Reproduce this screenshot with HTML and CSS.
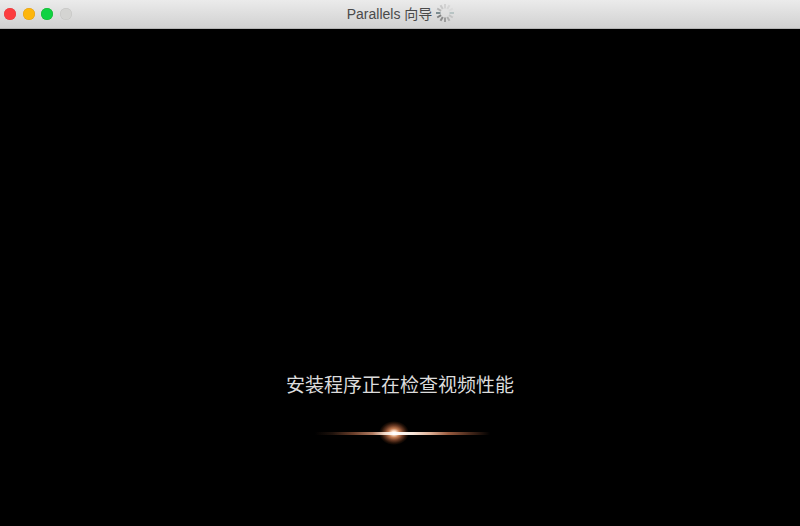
FILE: index.html
```
<!DOCTYPE html>
<html lang="zh">
<head>
<meta charset="utf-8">
<title>Parallels 向导</title>
<link rel="stylesheet" href="styles.css">
</head>
<body>
<div class="window">
  <header class="titlebar">
    <div class="lights">
      <span class="light red"></span>
      <span class="light yellow"></span>
      <span class="light green"></span>
      <span class="light gray"></span>
    </div>
    <div class="title">
      <span>Parallels 向导</span>
      <svg class="spinner" width="20" height="20" viewBox="0 0 20 20" aria-hidden="true">
        <g stroke-width="2" fill="none">
          <path d="M10 1V5.5" stroke="#d2d2d2"/>
          <path d="M14.5 2.2L12.2 6.1" stroke="#d6d6d6"/>
          <path d="M17.8 5.5L13.9 7.8" stroke="#dadada"/>
          <path d="M19 10H14.5" stroke="#b8c4c4"/>
          <path d="M17.8 14.5L13.9 12.2" stroke="#c4c4c4"/>
          <path d="M14.5 17.8L12.2 13.9" stroke="#b0b0b0"/>
          <path d="M10 19V14.5" stroke="#9c9c9c"/>
          <path d="M5.5 17.8L7.8 13.9" stroke="#8c8c8c"/>
          <path d="M2.2 14.5L6.1 12.2" stroke="#808080"/>
          <path d="M1 10H5.5" stroke="#7c8c90"/>
          <path d="M2.2 5.5L6.1 7.8" stroke="#b4b4b4"/>
          <path d="M5.5 2.2L7.8 6.1" stroke="#c8c8c8"/>
        </g>
      </svg>
    </div>
  </header>
  <main class="content">
    <p class="message">安装程序正在检查视频性能</p>
    <div class="flare">
      <span class="core"></span>
      <span class="streak"></span>
    </div>
  </main>
</div>
</body>
</html>
```
FILE: styles.css
```
* { box-sizing: border-box; }
html, body { margin: 0; padding: 0; background: #000; }
.window { width: 800px; height: 526px; display: flex; flex-direction: column; overflow: hidden; }
.titlebar {
  height: 29px;
  flex: none;
  display: flex;
  align-items: center;
  justify-content: center;
  position: relative;
  padding-left: 2px;
  background: linear-gradient(#ebebeb, #d1d1d1);
  border-bottom: 1px solid #b4b4b4;
}
.lights { position: absolute; left: 4px; top: 8px; display: flex; gap: 6.5px; }
.light { width: 12px; height: 12px; border-radius: 50%; display: block; }
.red { background: #fc3d3f; box-shadow: inset 0 0 0 .5px #e33e41; }
.yellow { background: #fdb60c; box-shadow: inset 0 0 0 .5px #e09e1a; }
.green { background: #0fd242; box-shadow: inset 0 0 0 .5px #17b230; }
.gray { background: #d4d4d2; box-shadow: inset 0 0 0 .5px #c4c4c2; }
.title {
  display: flex;
  align-items: center;
  gap: 3px;
  font: 14px/20px "Liberation Sans", "Noto Sans CJK SC", sans-serif;
  color: #4a4a4a;
}
.spinner { display: block; margin-bottom: 2px; }
.content {
  flex: 1;
  display: flex;
  flex-direction: column;
  align-items: center;
  padding-top: 343px;
  background: #000;
}
.message {
  margin: 0;
  font: 19px/24px "Noto Sans CJK SC", sans-serif;
  color: #dcdcdc;
  white-space: nowrap;
}
.flare { position: relative; width: 180px; height: 24px; margin-top: 25px; }
.streak {
  position: absolute;
  left: 5px; right: 0; top: 10.5px;
  height: 3px;
  filter: blur(.7px);
  background: linear-gradient(90deg, transparent, #1e120c 10%, #6a3e2a 22%, #b07c62 33%, #f4dccb 40%, #fff 45%, #f7e6da 56%, #dcae94 66%, #9a5c40 76%, #4a2a1c 88%, transparent);
}
.core {
  position: absolute;
  left: 69px; top: 0;
  width: 30px; height: 24px;
  border-radius: 50%;
  background: radial-gradient(closest-side, #fff 0%, #ffe2cc 16%, #c07a50 38%, #6a3a24 62%, #241208 84%, transparent 100%);
}
```
